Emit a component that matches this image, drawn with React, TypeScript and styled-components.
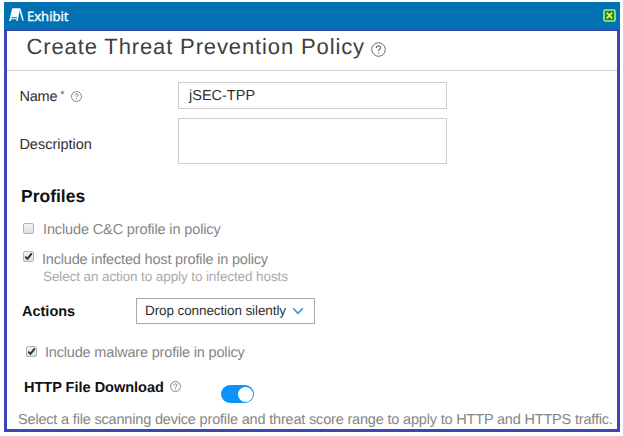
import React from "react";
import styled, { createGlobalStyle } from "styled-components";

const GlobalStyle = createGlobalStyle`
  * { box-sizing: border-box; }
  body { margin: 0; background: #fff; font-family: "Liberation Sans", Arial, sans-serif; text-rendering: geometricPrecision; }
`;

const Page = styled.div`
  width: 623px;
  height: 436px;
  padding: 2px 3px 4px 4px;
  overflow: hidden;
`;

const Window = styled.main`
  display: flex;
  flex-direction: column;
  height: 430px;
`;

const TitleBar = styled.header`
  display: flex;
  align-items: center;
  height: 27px;
  flex: none;
  padding: 0 4px 0 5px;
  background: #0072b2;
`;

const WindowTitle = styled.span`
  flex: 1;
  margin-left: 3px;
  color: #f2fbff;
  font: 13px/18px "Noto Sans", sans-serif;
  -webkit-text-stroke: 0.4px #f2fbff;
`;

const CloseButton = styled.button`
  display: flex;
  width: 13px;
  height: 13px;
  padding: 0;
  border: 0;
  background: none;
`;

const Panel = styled.section`
  flex: 1;
  border: solid #3f45b5;
  border-width: 2px 3px 3px 3px;
  background: #fff;
`;

const Heading = styled.div`
  display: flex;
  height: 40px;
  padding: 3px 0 0 19.5px;
  border-bottom: 1px solid #d2d2d2;
`;

const Row = styled.div<{ $top?: number; $left: number; $height: number }>`
  display: flex;
  align-items: center;
  height: ${(p) => p.$height}px;
  margin-top: ${(p) => p.$top ?? 0}px;
  padding-left: ${(p) => p.$left}px;
`;

const Text = styled.span<{
  $size?: number; $color?: string; $bold?: boolean; $spacing?: number; $drop?: number;
}>`
  font-size: ${(p) => p.$size ?? 14.5}px;
  line-height: ${(p) => Math.ceil((p.$size ?? 14.5) * 1.14)}px;
  font-weight: ${(p) => (p.$bold ? 700 : 400)};
  color: ${(p) => p.$color ?? "#303030"};
  letter-spacing: ${(p) => p.$spacing ?? 0}px;
  margin-top: ${(p) => p.$drop ?? 0}px;
  white-space: nowrap;
`;

const LabelCell = styled.div<{ $width: number }>`
  display: flex;
  align-items: center;
  width: ${(p) => p.$width}px;
  flex: none;
`;

const Field = styled.div<{ $height: number }>`
  display: flex;
  align-items: center;
  width: 269px;
  height: ${(p) => p.$height}px;
  padding-left: 10px;
  border: 1px solid #cecece;
`;

const Select = styled.div`
  display: flex;
  align-items: center;
  gap: 6px;
  width: 179px;
  height: 26px;
  padding-left: 8px;
  border: 1px solid #aaa;
`;

const Box = styled.span<{ $gap: number; $lift?: number }>`
  display: flex;
  width: 11px;
  height: 11px;
  flex: none;
  margin-right: ${(p) => p.$gap}px;
  margin-bottom: ${(p) => p.$lift ?? 0}px;
  border: 1px solid #b4b4b4;
  border-radius: 2px;
  background: linear-gradient(#f4f4f4, #dedede);
`;

const Toggle = styled.span`
  display: flex;
  justify-content: flex-end;
  width: 33px;
  height: 18px;
  margin-top: 12px;
  padding: 1.5px;
  border-radius: 9px;
  background: #0a94fb;
`;

const Knob = styled.span`
  width: 15px;
  height: 15px;
  border-radius: 50%;
  background: #fff;
`;

const HelpSvg = styled.svg<{ $left: number; $top?: number }>`
  flex: none;
  margin-left: ${(p) => p.$left}px;
  margin-top: ${(p) => p.$top ?? 0}px;
`;

function Help({ size, left, top }: { size: number; left: number; top?: number }) {
  return (
    <HelpSvg $left={left} $top={top} width={size} height={size} viewBox="0 0 15 15" fill="none" stroke="#6a6a6a">
      <circle cx="7.5" cy="7.5" r="6.8" strokeWidth={size > 12 ? 1 : 1.1} />
      <path d="M5.4 5.9C5.4 3.2 9.6 3.2 9.6 5.7C9.6 7.2 7.5 7.3 7.5 9.1M7.5 10.3V11.6" strokeWidth="1.2" />
    </HelpSvg>
  );
}

function Checkbox({ checked, gap, lift }: { checked?: boolean; gap: number; lift?: number }) {
  return (
    <Box $gap={gap} $lift={lift}>
      {checked && (
        <svg width="9" height="9" viewBox="0 0 9 9" fill="none" stroke="#2c2c2c" strokeWidth="1.9">
          <path d="M1.3 4.7L3.5 6.9L7.8 1.3" />
        </svg>
      )}
    </Box>
  );
}

export default function App() {
  return (
    <Page>
      <GlobalStyle />
      <Window>
        <TitleBar>
          <svg width="15" height="15" viewBox="0 0 15 15">
            <path d="M3.2 0.3H11.2L9.4 9.2L8.8 13H7.3L7.7 11.3H2.4L1.6 13H0L1.2 8.8Z" fill="#f2fbff" />
            <path d="M2.4 9.7H8" stroke="#0072b2" strokeWidth="1" />
            <path d="M10.8 0.8L14.1 12.6" stroke="#f2fbff" strokeWidth="1.5" />
          </svg>
          <WindowTitle>Exhibit</WindowTitle>
          <CloseButton aria-label="Close">
            <svg width="13" height="13" viewBox="0 0 13 13">
              <rect x="1" y="1" width="11" height="11" rx="1.2" fill="#237f20" stroke="#a4ef8c" strokeWidth="1.6" />
              <path d="M3.7 3.7L9.3 9.3M9.3 3.7L3.7 9.3" stroke="#d4f568" strokeWidth="1.8" />
            </svg>
          </CloseButton>
        </TitleBar>
        <Panel>
          <Heading>
            <Text $size={22} $spacing={0.87} $color="#404040">Create Threat Prevention Policy</Text>
            <Help size={15} left={6.5} top={8} />
          </Heading>
          <Row $top={11} $left={12.4} $height={27}>
            <LabelCell $width={158.6}>
              <Text $spacing={-0.2} $drop={3}>Name</Text>
              <Text $size={11} $color="#666">&nbsp;*</Text>
              <Help size={11} left={6} top={1} />
            </LabelCell>
            <Field $height={27}><Text $drop={2}>jSEC-TPP</Text></Field>
          </Row>
          <Row $top={9} $left={12.4} $height={46}>
            <LabelCell $width={158.6}><Text $drop={8}>Description</Text></LabelCell>
            <Field $height={46} />
          </Row>
          <Row $top={22} $left={14} $height={20}>
            <Text $size={17.5} $bold $color="#111">Profiles</Text>
          </Row>
          <Row $top={15} $left={16} $height={16}>
            <Checkbox gap={9} lift={2} />
            <Text $color="#858585" $spacing={-0.13} $drop={2}>Include C&amp;C profile in policy</Text>
          </Row>
          <Row $top={14} $left={16} $height={16}>
            <Checkbox checked gap={8} lift={5} />
            <Text $color="#858585" $spacing={-0.18} $drop={2}>Include infected host profile in policy</Text>
          </Row>
          <Row $top={2} $left={36} $height={15}>
            <Text $size={13.5} $color="#aaa" $spacing={-0.1}>Select an action to apply to infected hosts</Text>
          </Row>
          <Row $top={14} $left={15} $height={26}>
            <LabelCell $width={114}><Text $bold $color="#111" $drop={2}>Actions</Text></LabelCell>
            <Select>
              <Text $size={13.5} $spacing={-0.1}>Drop connection silently</Text>
              <svg width="12" height="8" viewBox="0 0 12 8" fill="none" stroke="#3990dc" strokeWidth="1.6">
                <path d="M1.2 1.2L6 6.3L10.8 1.2" />
              </svg>
            </Select>
          </Row>
          <Row $top={20} $left={19} $height={16}>
            <Checkbox checked gap={8} lift={2} />
            <Text $color="#858585" $spacing={-0.18} $drop={2}>Include malware profile in policy</Text>
          </Row>
          <Row $top={15} $left={17} $height={26}>
            <LabelCell $width={197}>
              <Text $bold $color="#111">HTTP File Download</Text>
              <Help size={11} left={6} top={-3} />
            </LabelCell>
            <Toggle><Knob /></Toggle>
          </Row>
          <Row $top={10} $left={11} $height={16}>
            <Text $color="#858585" $spacing={-0.18} $drop={2}>
              Select a file scanning device profile and threat score range to apply to HTTP and HTTPS traffic.
            </Text>
          </Row>
        </Panel>
      </Window>
    </Page>
  );
}
